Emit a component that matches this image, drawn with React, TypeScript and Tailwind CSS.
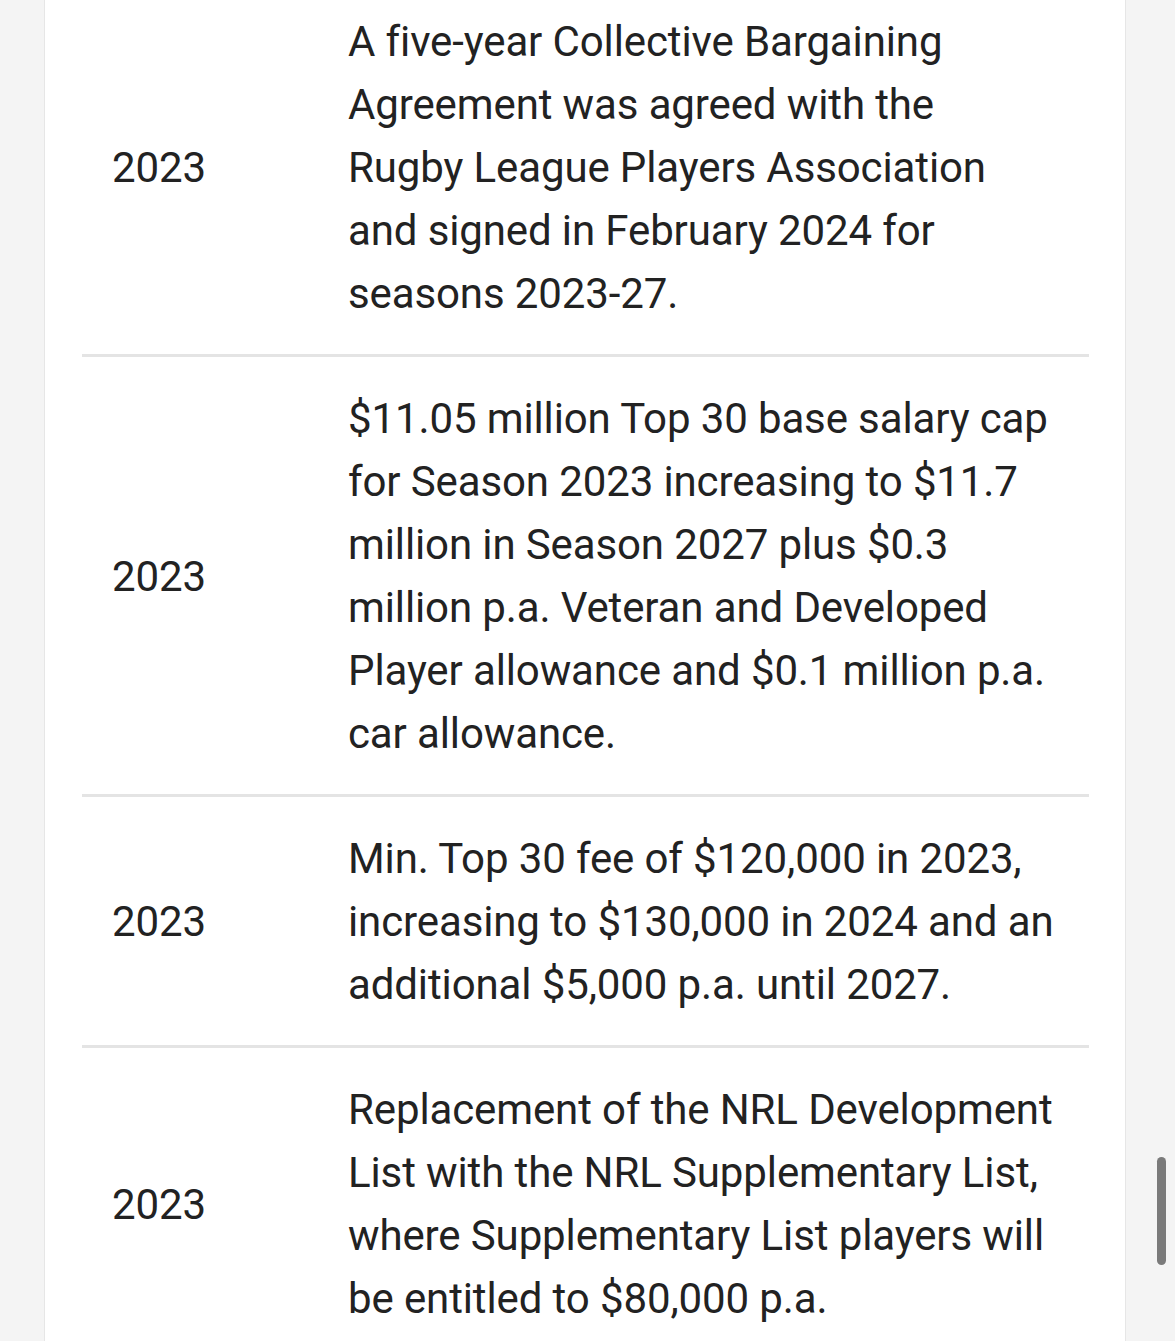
import React from "react";

const rows = [
  {
    year: "2023",
    text: "A five-year Collective Bargaining Agreement was agreed with the Rugby League Players Association and signed in February 2024 for seasons 2023-27.",
  },
  {
    year: "2023",
    text: "$11.05 million Top 30 base salary cap for Season 2023 increasing to $11.7 million in Season 2027 plus $0.3 million p.a. Veteran and Developed Player allowance and $0.1 million p.a. car allowance.",
  },
  {
    year: "2023",
    text: "Min. Top 30 fee of $120,000 in 2023, increasing to $130,000 in 2024 and an additional $5,000 p.a. until 2027.",
  },
  {
    year: "2023",
    text: "Replacement of the NRL Development List with the NRL Supplementary List, where Supplementary List players will be entitled to $80,000 p.a.",
  },
];

export default function App() {
  return (
    <div
      className="relative h-[1341px] w-[1175px] overflow-hidden bg-[#f4f4f4]"
      style={{ fontFamily: "Roboto, 'Noto Sans', sans-serif" }}
    >
      <div className="ml-[44px] h-full w-[1082px] overflow-hidden border-x border-[#e6e6e6] bg-white">
        <div className="-mt-[20px] pl-[37px] pr-[36px]">
          {rows.map((r, i) => (
            <div
              key={i}
              className="flex border-b-[3px] border-[#e4e4e4] text-[42px] leading-[63px] tracking-[-0.12px] text-[#222222]"
            >
              <div className="flex w-[236px] shrink-0 items-center px-[30px] pt-[30px] pb-[29px]">
                {r.year}
              </div>
              <div className="flex-1 px-[30px] pt-[30px] pb-[29px]">{r.text}</div>
            </div>
          ))}
        </div>
      </div>
      <div className="absolute left-[1157px] top-[1157px] h-[108px] w-[9px] rounded-full bg-[#7a7a7a]" />
    </div>
  );
}
